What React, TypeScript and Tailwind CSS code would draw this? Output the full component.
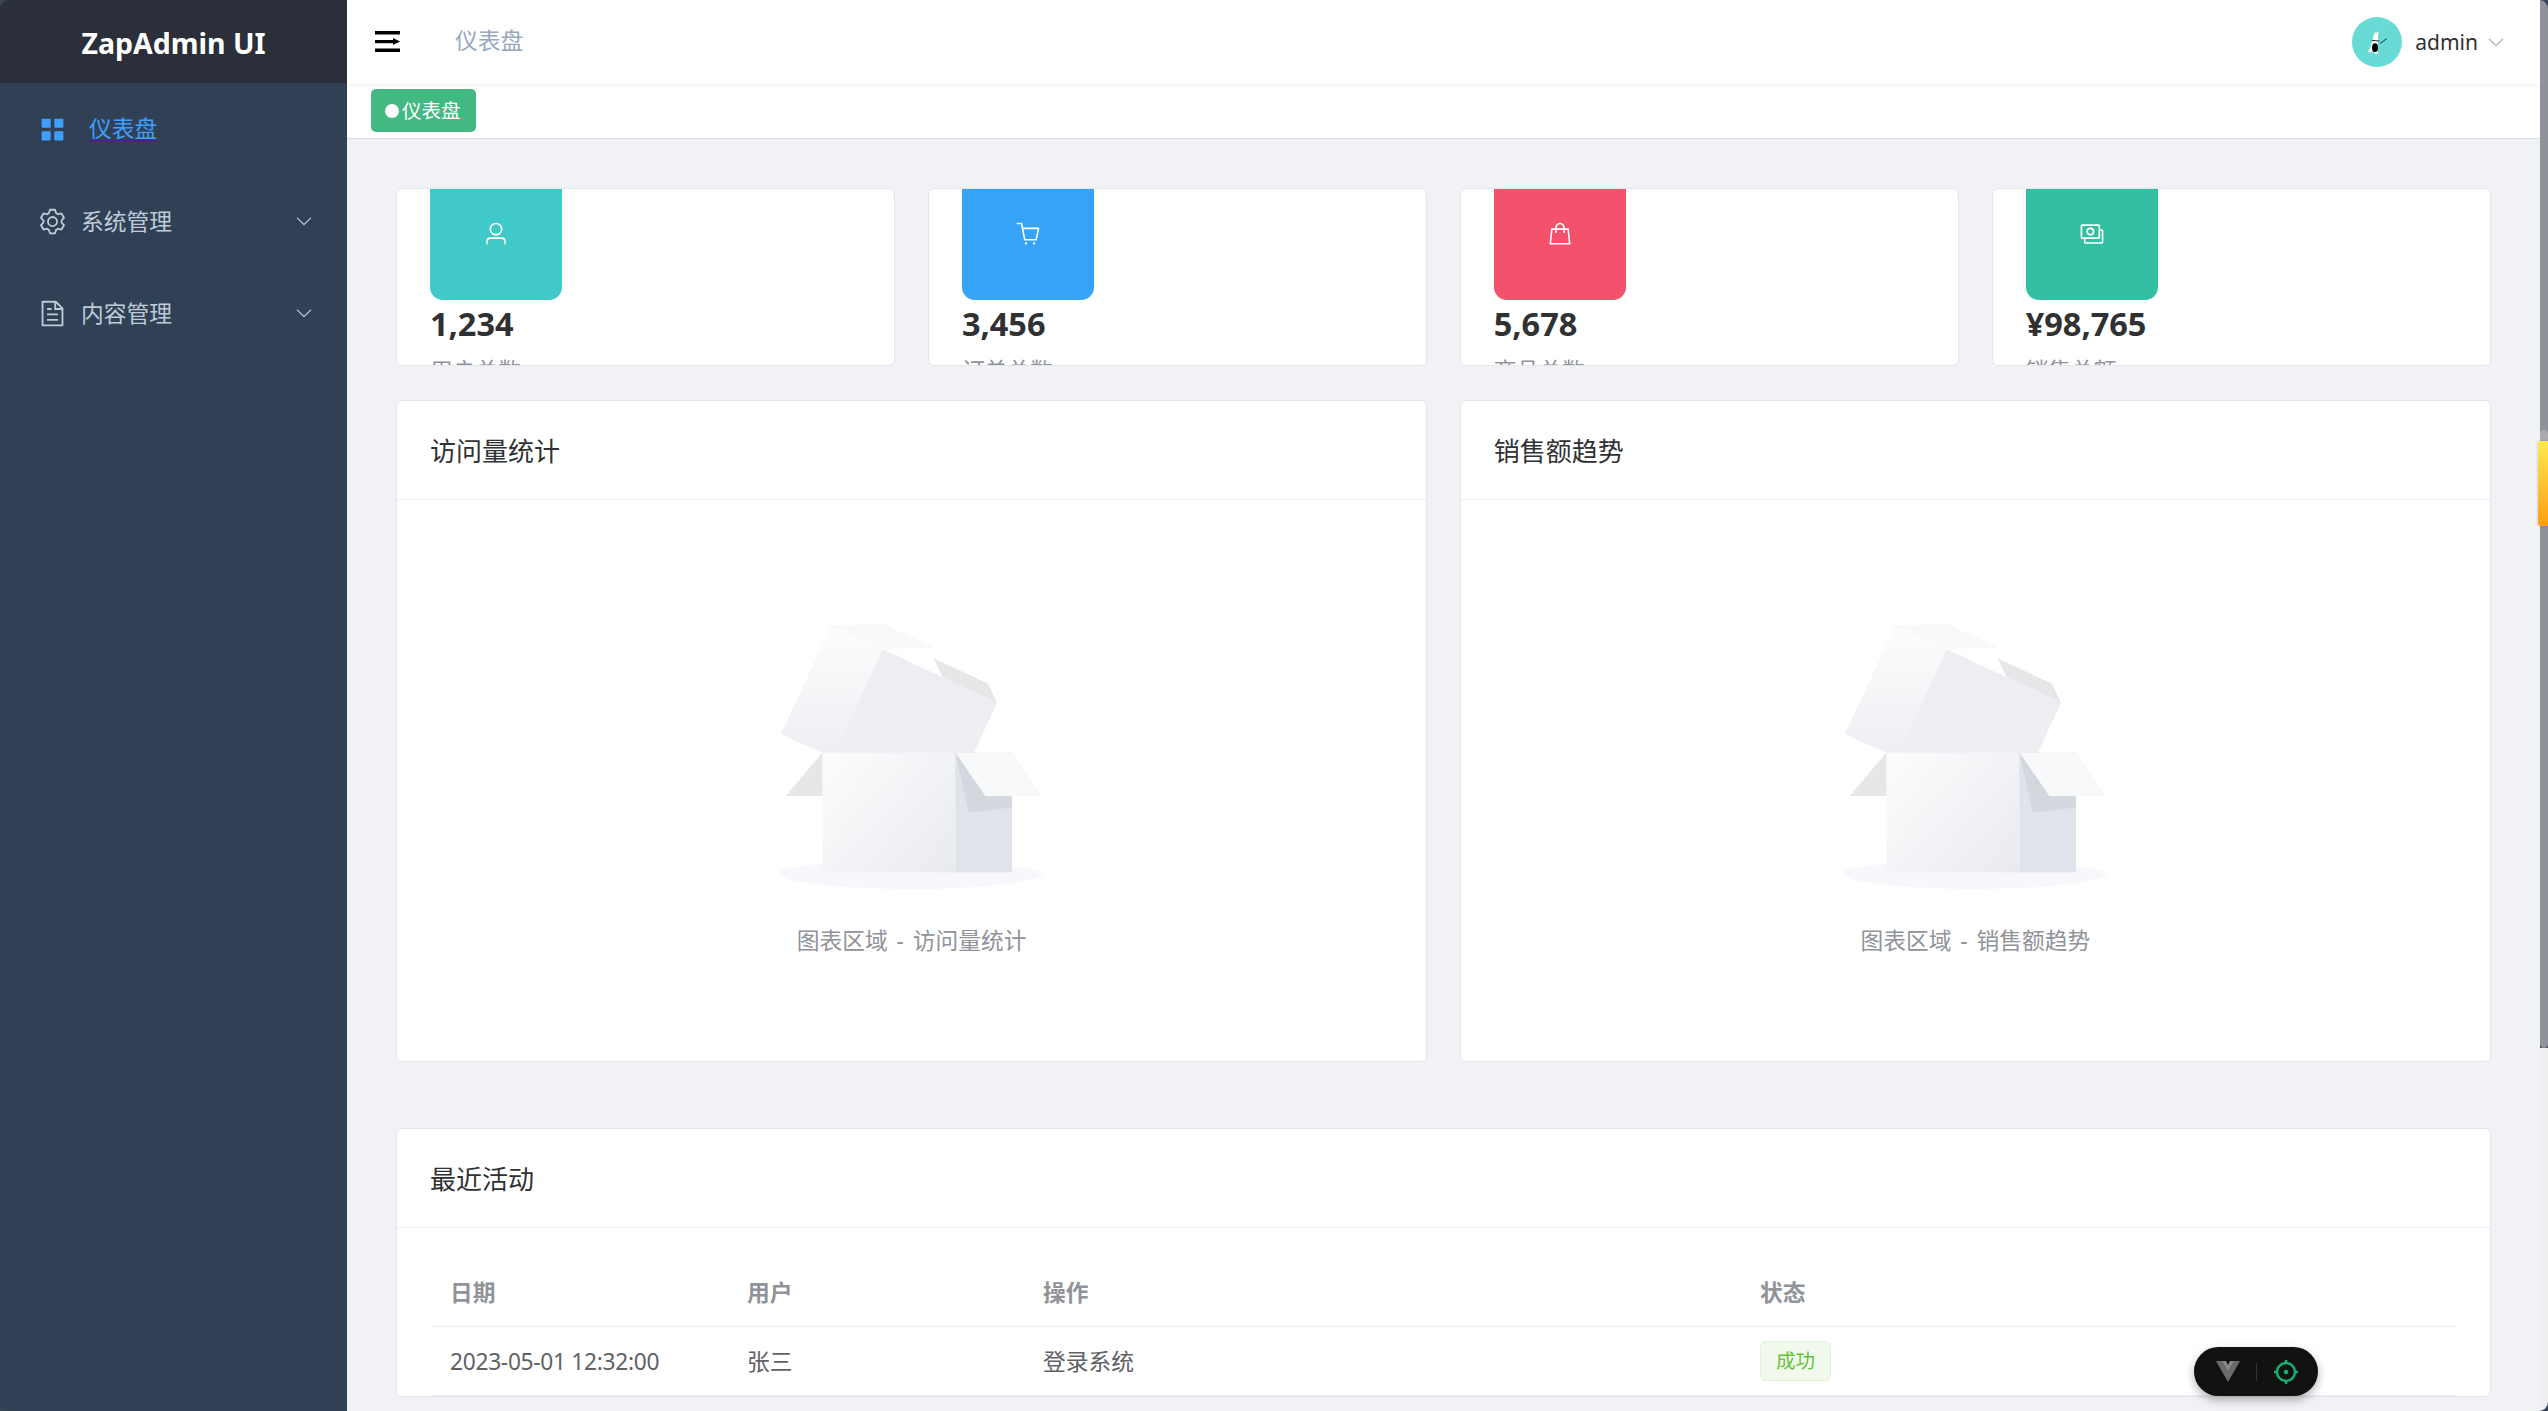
import React from "react";

const P = {
  menu: "M160 448a32 32 0 0 1-32-32V160.064a32 32 0 0 1 32-32h256a32 32 0 0 1 32 32V416a32 32 0 0 1-32 32H160zm448 0a32 32 0 0 1-32-32V160.064a32 32 0 0 1 32-32h255.936a32 32 0 0 1 32 32V416a32 32 0 0 1-32 32H608zM160 896a32 32 0 0 1-32-32V608a32 32 0 0 1 32-32h256a32 32 0 0 1 32 32v256a32 32 0 0 1-32 32H160zm448 0a32 32 0 0 1-32-32V608a32 32 0 0 1 32-32h255.936a32 32 0 0 1 32 32v256a32 32 0 0 1-32 32H608z",
  setting: "M600.704 64a32 32 0 0 1 30.464 22.208l35.2 109.376c14.784 7.232 28.928 15.36 42.432 24.512l112.384-24.192a32 32 0 0 1 34.432 15.36L944.32 364.8a32 32 0 0 1-4.032 37.504l-77.12 85.12a357.12 357.12 0 0 1 0 49.024l77.12 85.248a32 32 0 0 1 4.032 37.504l-88.704 153.6a32 32 0 0 1-34.432 15.296L708.8 803.904c-13.44 9.088-27.648 17.28-42.368 24.512l-35.264 109.376A32 32 0 0 1 600.704 960H423.296a32 32 0 0 1-30.464-22.208L357.696 828.48a351.616 351.616 0 0 1-42.56-24.64l-112.32 24.256a32 32 0 0 1-34.432-15.36L79.68 659.2a32 32 0 0 1 4.032-37.504l77.12-85.248a357.12 357.12 0 0 1 0-48.896l-77.12-85.248A32 32 0 0 1 79.68 364.8l88.704-153.6a32 32 0 0 1 34.432-15.296l112.32 24.256c13.568-9.152 27.776-17.408 42.56-24.64l35.2-109.312A32 32 0 0 1 423.232 64H600.64zm-23.424 64H446.72l-36.352 113.088-24.512 11.968a294.113 294.113 0 0 0-34.816 20.096l-22.656 15.36-116.224-25.088-65.28 113.152 79.68 88.192-1.92 27.136a293.12 293.12 0 0 0 0 40.192l1.92 27.136-79.808 88.192 65.344 113.152 116.224-25.024 22.656 15.296a294.113 294.113 0 0 0 34.816 20.096l24.512 11.968L446.72 896h130.688l36.48-113.152 24.448-11.904a288.282 288.282 0 0 0 34.752-20.096l22.592-15.296 116.288 25.024 65.28-113.152-79.744-88.192 1.92-27.136a293.12 293.12 0 0 0 0-40.256l-1.92-27.136 79.808-88.128-65.344-113.152-116.288 24.96-22.592-15.232a287.616 287.616 0 0 0-34.752-20.096l-24.448-11.904L577.344 128zM512 320a192 192 0 1 1 0 384 192 192 0 0 1 0-384zm0 64a128 128 0 1 0 0 256 128 128 0 0 0 0-256z",
  document: "M832 384H576V128H192v768h640V384zm-26.496-64L640 154.496V320h165.504zM160 64h480l256 256v608a32 32 0 0 1-32 32H160a32 32 0 0 1-32-32V96a32 32 0 0 1 32-32zm160 448h384v64H320v-64zm0-192h160v64H320v-64zm0 384h384v64H320v-64z",
  arrow: "M831.872 340.864 512 652.672 192.128 340.864a30.592 30.592 0 0 0-42.752 0 29.12 29.12 0 0 0 0 41.6L489.664 714.24a32 32 0 0 0 44.672 0l340.288-331.712a29.12 29.12 0 0 0 0-41.728 30.592 30.592 0 0 0-42.752 0z",
  user: "M512 512a192 192 0 1 0 0-384 192 192 0 0 0 0 384zm0 64a256 256 0 1 1 0-512 256 256 0 0 1 0 512zm320 320v-96a96 96 0 0 0-96-96H288a96 96 0 0 0-96 96v96a32 32 0 1 1-64 0v-96a160 160 0 0 1 160-160h448a160 160 0 0 1 160 160v96a32 32 0 1 1-64 0z",
  cart: "M432 928a48 48 0 1 1 0-96 48 48 0 0 1 0 96zm320 0a48 48 0 1 1 0-96 48 48 0 0 1 0 96zM96 128a32 32 0 0 1 0-64h160a32 32 0 0 1 31.36 25.728L320.64 256H928a32 32 0 0 1 31.296 38.72l-96 448A32 32 0 0 1 832 768H384a32 32 0 0 1-31.36-25.728L229.76 128H96zm314.24 576h395.904l82.304-384H333.44l76.8 384z",
  goods: "M320 288v-22.336C320 154.688 405.504 64 512 64s192 90.688 192 201.664v22.4h131.072a32 32 0 0 1 31.808 28.8l57.6 576a32 32 0 0 1-31.808 35.2H131.328a32 32 0 0 1-31.808-35.2l57.6-576a32 32 0 0 1 31.808-28.8H320zm64 0h256v-22.336C640 189.248 582.272 128 512 128c-70.272 0-128 61.248-128 137.664v22.4zm-64 64H217.92l-51.2 512h690.56l-51.264-512H704v96a32 32 0 1 1-64 0v-96H384v96a32 32 0 0 1-64 0v-96z",
  money: "M256 640v192h640V384H768v-64h128a64 64 0 0 1 64 64v448a64 64 0 0 1-64 64H256a64 64 0 0 1-64-64V640h64zM128 128h640a64 64 0 0 1 64 64v448a64 64 0 0 1-64 64H128a64 64 0 0 1-64-64V192a64 64 0 0 1 64-64zm0 64v448h640V192H128zM448 576a160 160 0 1 1 0-320 160 160 0 0 1 0 320zm0-64a96 96 0 1 0 0-192 96 96 0 0 0 0 192z",
};

function Ep({ d, className }: { d: string; className: string }) {
  return (
    <svg viewBox="0 0 1024 1024" className={className} fill="currentColor">
      <path d={d} />
    </svg>
  );
}

function EmptyBox({ id }: { id: string }) {
  return (
    <svg viewBox="0 0 79 86" className="block w-[263px] h-[286px] -ml-[2px]">
      <defs>
        <linearGradient id={`${id}g1`} x1="38.85%" y1="0%" x2="61.15%" y2="100%">
          <stop stopColor="#fcfcfd" offset="0%" />
          <stop stopColor="#eeeff3" offset="100%" />
        </linearGradient>
        <linearGradient id={`${id}g2`} x1="0%" y1="9.5%" x2="100%" y2="90.5%">
          <stop stopColor="#fcfcfd" offset="0%" />
          <stop stopColor="#e9ebef" offset="100%" />
        </linearGradient>
        <clipPath id={`${id}c`}>
          <rect x="0" y="0" width="17" height="36" />
        </clipPath>
      </defs>
      <path d="M39.5,86 C61.3152476,86 79,83.9106622 79,81.3333333 C79,78.7560045 57.3152476,78 35.5,78 C13.6847524,78 0,78.7560045 0,81.3333333 C0,83.9106622 17.6847524,86 39.5,86 Z" fill="#f7f8fc" />
      <polygon fill="#e5e7e9" transform="translate(27.5 51.5) scale(1 -1) translate(-27.5 -51.5)" points="13 58 53 58 42 45 2 45" />
      <g transform="translate(34.5 31.5) scale(-1 1) rotate(-25) translate(-34.5 -31.5) translate(7 10)">
        <polygon fill="#e5e7e9" transform="translate(11.5 5) scale(1 -1) translate(-11.5 -5)" points="0 3 18 3 23 7 5 7" />
        <polygon fill="#edeef2" points="0 7 38 7 38 43 0 43" />
        <rect fill={`url(#${id}g1)`} transform="translate(46.5 25) scale(-1 1) translate(-46.5 -25)" x="38" y="7" width="17" height="36" />
        <polygon fill="#f8f9fb" transform="translate(39.5 3.5) scale(-1 1) translate(-39.5 -3.5)" points="24 7 41 7 55 0 38 0" />
      </g>
      <rect fill={`url(#${id}g2)`} x="13" y="45" width="40" height="36" />
      <g transform="translate(53 45)">
        <rect fill="#e0e3e9" x="0" y="0" width="17" height="36" />
        <g clipPath={`url(#${id}c)`}>
          <polygon fill="#d5d7de" transform="translate(12 9) scale(-1 1) translate(-12 -9)" points="7 0 24 0 20 18 7 16.5" />
        </g>
      </g>
      <polygon fill="#f8f9fb" transform="translate(66 51.5) scale(-1 1) translate(-66 -51.5)" points="62 45 79 45 70 58 53 58" />
    </svg>
  );
}

function Stat({ icon, color, value, label }: { icon: string; color: string; value: string; label: string }) {
  return (
    <div className="h-[178px] overflow-hidden bg-white border border-[#e4e6ec] rounded-[6px] pl-[33px]">
      <div className={`-mt-[21px] w-[132px] h-[132px] rounded-[13px] flex items-center justify-center text-white ${color}`}>
        <Ep d={icon} className="w-[26px] h-[26px]" />
      </div>
      <div className="mt-[2px] h-[44px] leading-[44px] text-[32.5px] font-bold text-[#303133]">{value}</div>
      <div className="mt-[9px] h-[31px] leading-[31px] text-[22.75px] text-[#909399]">{label}</div>
    </div>
  );
}

function ChartCard({ id, title }: { id: string; title: string }) {
  return (
    <div className="h-[662px] bg-white border border-[#e4e6ec] rounded-[6px] overflow-hidden">
      <div className="h-[99px] border-b border-[#ebeef5] pl-[33px] pt-[2px] flex items-center text-[26px] text-[#303133]">{title}</div>
      <div className="flex flex-col items-center pt-[103px]">
        <EmptyBox id={id} />
        <div className="mt-[36px] h-[31px] leading-[31px] text-[22.75px] text-[#909399] [word-spacing:3px]">图表区域 - {title}</div>
      </div>
    </div>
  );
}

function MenuItem({ icon, label }: { icon: string; label: string }) {
  return (
    <div className="h-[92px] flex items-center pl-[38px] pr-[33px] text-[#bfcbd9] text-[22.75px]">
      <Ep d={icon} className="w-[29px] h-[29px]" />
      <span className="ml-[14px] pt-[2px] flex-1">{label}</span>
      <Ep d={P.arrow} className="w-[20px] h-[20px]" />
    </div>
  );
}

export default function App() {
  return (
    <div className="h-[1411px] w-full bg-[#3a4658] overflow-hidden font-['Noto_Sans','Noto_Sans_CJK_SC',sans-serif]">
      <div className="relative h-[1411px] flex rounded-[9px] overflow-hidden">
        <aside className="w-[347px] shrink-0 bg-[#304156]">
          <div className="h-[83px] bg-[#2b2f3a] pt-[4px] flex items-center justify-center text-white text-[28.5px] font-bold">ZapAdmin UI</div>
          <div className="h-[92px] flex items-center pl-[38px] text-[#409eff] text-[22.75px]">
            <Ep d={P.menu} className="w-[29px] h-[29px]" />
            <span className="ml-[22px] underline decoration-[#551a8b] underline-offset-[3px]">仪表盘</span>
          </div>
          <MenuItem icon={P.setting} label="系统管理" />
          <MenuItem icon={P.document} label="内容管理" />
        </aside>

        <main className="flex-1 min-w-0 bg-[#f0f2f5] overflow-hidden">
          <header className="relative h-[84px] bg-white shadow-[0_1px_4px_rgba(0,21,41,0.08)] flex items-center pl-[28px] pr-[34px]">
            <svg viewBox="0 0 25 21" className="w-[25px] h-[21px] -mt-[2px]" fill="#000">
              <rect x="0" y="0" width="25" height="3.5" />
              <rect x="0" y="9" width="18" height="3.2" />
              <polygon points="18,7 25,10.5 18,14" />
              <rect x="0" y="17.5" width="25" height="3.5" />
            </svg>
            <span className="ml-[55px] flex-1 text-[22.75px] text-[#97a8be] -mt-[2px]">仪表盘</span>
            <div className="flex items-center">
              <svg viewBox="0 0 150 150" className="w-[50px] h-[50px] rounded-full bg-[#69dbd6]">
                <polygon fill="#fff" points="66,52 72,44 74,48 80,42 78,60 78,72 76,100 80,110 68,110 64,100 56,108 48,104 56,90 60,72" />
                <ellipse cx="69" cy="92" rx="9" ry="13" fill="#000" />
                <path d="M59 70 L82 72 M84 80 L104 65" stroke="#1e2a2a" strokeWidth="3" fill="none" />
              </svg>
              <span className="ml-[13px] pt-[2px] text-[21px] text-[#303133]">admin</span>
              <Ep d={P.arrow} className="ml-[8px] w-[20px] h-[20px] text-[#a8abb2]" />
            </div>
          </header>
          <div className="h-[55px] bg-white border-b border-[#d8dce5] pt-[5px] pl-[24px]">
            <div className="inline-flex items-center h-[43px] w-[105px] pl-[14px] rounded-[5px] bg-[#42b983] text-white text-[19.5px]">
              <span className="w-[14px] h-[14px] rounded-full bg-white mr-[3px]" />
              <span className="pt-[1px]">仪表盘</span>
            </div>
          </div>

          <div className="px-[49px] pt-[49px]">
            <div className="grid grid-cols-4 gap-x-[32.5px]">
              <Stat icon={P.user} color="bg-[#40c9c6]" value="1,234" label="用户总数" />
              <Stat icon={P.cart} color="bg-[#36a3f7]" value="3,456" label="订单总数" />
              <Stat icon={P.goods} color="bg-[#f4516c]" value="5,678" label="商品总数" />
              <Stat icon={P.money} color="bg-[#34bfa3]" value="¥98,765" label="销售总额" />
            </div>

            <div className="grid grid-cols-2 gap-x-[32.5px] mt-[34px]">
              <ChartCard id="a" title="访问量统计" />
              <ChartCard id="b" title="销售额趋势" />
            </div>

            <div className="mt-[66px] bg-white border border-[#e4e6ec] rounded-[6px]">
              <div className="h-[99px] border-b border-[#ebeef5] pl-[33px] pt-[2px] flex items-center text-[26px] text-[#303133]">最近活动</div>
              <div className="px-[34px] pt-[32px]">
                <table className="w-full table-fixed border-collapse text-[22.75px]">
                  <thead>
                    <tr className="h-[66px] border-b border-[#ebeef5] text-left text-[#909399]">
                      <th className="w-[297px] pl-[19px] pt-[1px] font-bold">日期</th>
                      <th className="w-[296px] pl-[19px] pt-[1px] font-bold">用户</th>
                      <th className="w-[717px] pl-[19px] pt-[1px] font-bold">操作</th>
                      <th className="pl-[19px] pt-[1px] font-bold">状态</th>
                    </tr>
                  </thead>
                  <tbody>
                    <tr className="h-[69px] border-b border-[#ebeef5] text-[#606266]">
                      <td className="pl-[19px] pt-[3px] tracking-[-0.3px]">2023-05-01 12:32:00</td>
                      <td className="pl-[19px] pt-[3px]">张三</td>
                      <td className="pl-[19px] pt-[3px]">登录系统</td>
                      <td className="pl-[19px]">
                        <span className="inline-flex items-center justify-center w-[71px] h-[40px] rounded-[6px] bg-[#f0f9eb] border border-[#e1f3d8] text-[#67c23a] text-[19.5px] align-middle">成功</span>
                      </td>
                    </tr>
                  </tbody>
                </table>
              </div>
            </div>
          </div>
        </main>

        <div className="w-[8px] shrink-0 flex flex-col">
          <div className="h-[1048px] bg-[#8f929b] rounded-b-[4px]" />
          <div className="flex-1 bg-[#efefef]" />
        </div>

        <div className="absolute right-0 top-[430px] w-[8px] h-[12px] rounded-t-[4px] bg-[#a9abb1]" />
        <div className="absolute right-0 top-[441px] w-[10px] h-[85px] rounded-l-[3px] bg-gradient-to-b from-[#ffe94d] to-[#ff9d0a] shadow-[0_0_3px_rgba(0,0,0,0.2)]" />

        <div className="absolute left-[2194px] top-[1347px] w-[124px] h-[49px] rounded-full bg-[#111111] shadow-[0_4px_10px_rgba(0,0,0,0.3)] flex items-center pl-[22px]">
          <svg viewBox="0 0 24 21" className="w-[24px] h-[21px]">
            <polygon points="0,0 6,0 12,11 18,0 24,0 12,21" fill="#6b6b6b" />
            <polygon points="6,0 10,0 12,4 14,0 18,0 12,11" fill="#8a8a8a" />
          </svg>
          <span className="ml-[16px] w-px h-[18px] bg-[#333333]" />
          <svg viewBox="0 0 26 26" className="ml-[16px] w-[26px] h-[26px]" fill="none" stroke="#10b574" strokeWidth="2.4">
            <circle cx="13" cy="13" r="9" />
            <circle cx="13" cy="13" r="2.2" fill="#10b574" stroke="none" />
            <path d="M13 1v3M13 22v3M1 13h3M22 13h3" />
          </svg>
        </div>
      </div>
    </div>
  );
}
